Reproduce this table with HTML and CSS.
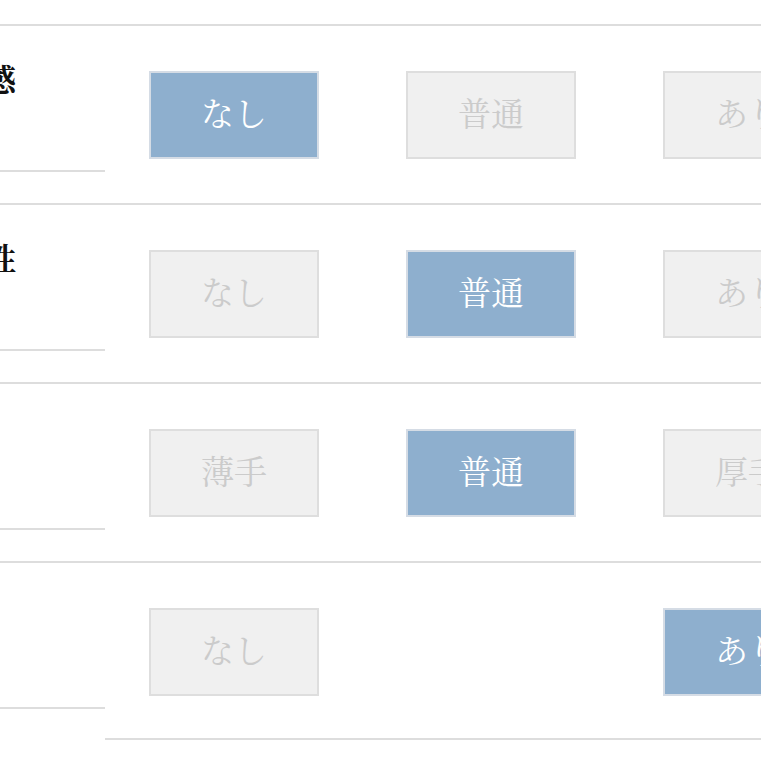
FILE: index.html
```html
<!DOCTYPE html>
<html lang="ja">
<head>
<meta charset="utf-8">
<title>商品詳細</title>
<link rel="stylesheet" href="styles.css">
</head>
<body>
<div class="spec">
  <div class="row">
    <div class="label">透け感</div>
    <div class="opts">
      <span class="opt on">なし</span>
      <span class="opt">普通</span>
      <span class="opt">あり</span>
    </div>
  </div>
  <div class="row">
    <div class="label">伸縮性</div>
    <div class="opts">
      <span class="opt">なし</span>
      <span class="opt on">普通</span>
      <span class="opt">あり</span>
    </div>
  </div>
  <div class="row">
    <div class="label">厚み</div>
    <div class="opts">
      <span class="opt">薄手</span>
      <span class="opt on">普通</span>
      <span class="opt">厚手</span>
    </div>
  </div>
  <div class="row">
    <div class="label">裏地</div>
    <div class="opts">
      <span class="opt">なし</span>
      <span class="gap"></span>
      <span class="opt on">あり</span>
    </div>
  </div>
</div>
</body>
</html>
```
FILE: styles.css
```css
html, body {
  margin: 0;
  padding: 0;
  background: #ffffff;
  overflow: hidden;
}
body {
  width: 761px;
  height: 761px;
  font-family: "Noto Serif CJK JP", "Liberation Serif", "Noto Sans CJK JP", serif;
}
.spec {
  margin-left: -77px;
  padding-top: 24px;
  width: 1100px;
}
.row {
  display: flex;
  border-top: 2px solid #dddddd;
  height: 177px;
}
.label {
  box-sizing: border-box;
  width: 182px;
  height: 146px;
  flex: none;
  padding-top: 30px;
  font-size: 31px;
  font-weight: bold;
  line-height: 43px;
  color: #111111;
  border-bottom: 2px solid #dddddd;
  white-space: nowrap;
}
.opts {
  box-sizing: border-box;
  flex: 1;
  height: 177px;
  display: grid;
  grid-template-columns: repeat(3, 170px);
  column-gap: 87px;
  align-content: start;
  padding-top: 45px;
  padding-left: 44px;
}
.row:last-child .opts {
  border-bottom: 2px solid #dddddd;
}
.opt {
  box-sizing: border-box;
  height: 88px;
  display: flex;
  align-items: center;
  justify-content: center;
  padding-bottom: 8px;
  background: #f0f0f0;
  border: 2px solid #dedede;
  color: #cbcbcb;
  font-size: 33px;
}
.opt.on {
  background: #8eafce;
  border-color: #d5dce5;
  color: #ffffff;
}
```
